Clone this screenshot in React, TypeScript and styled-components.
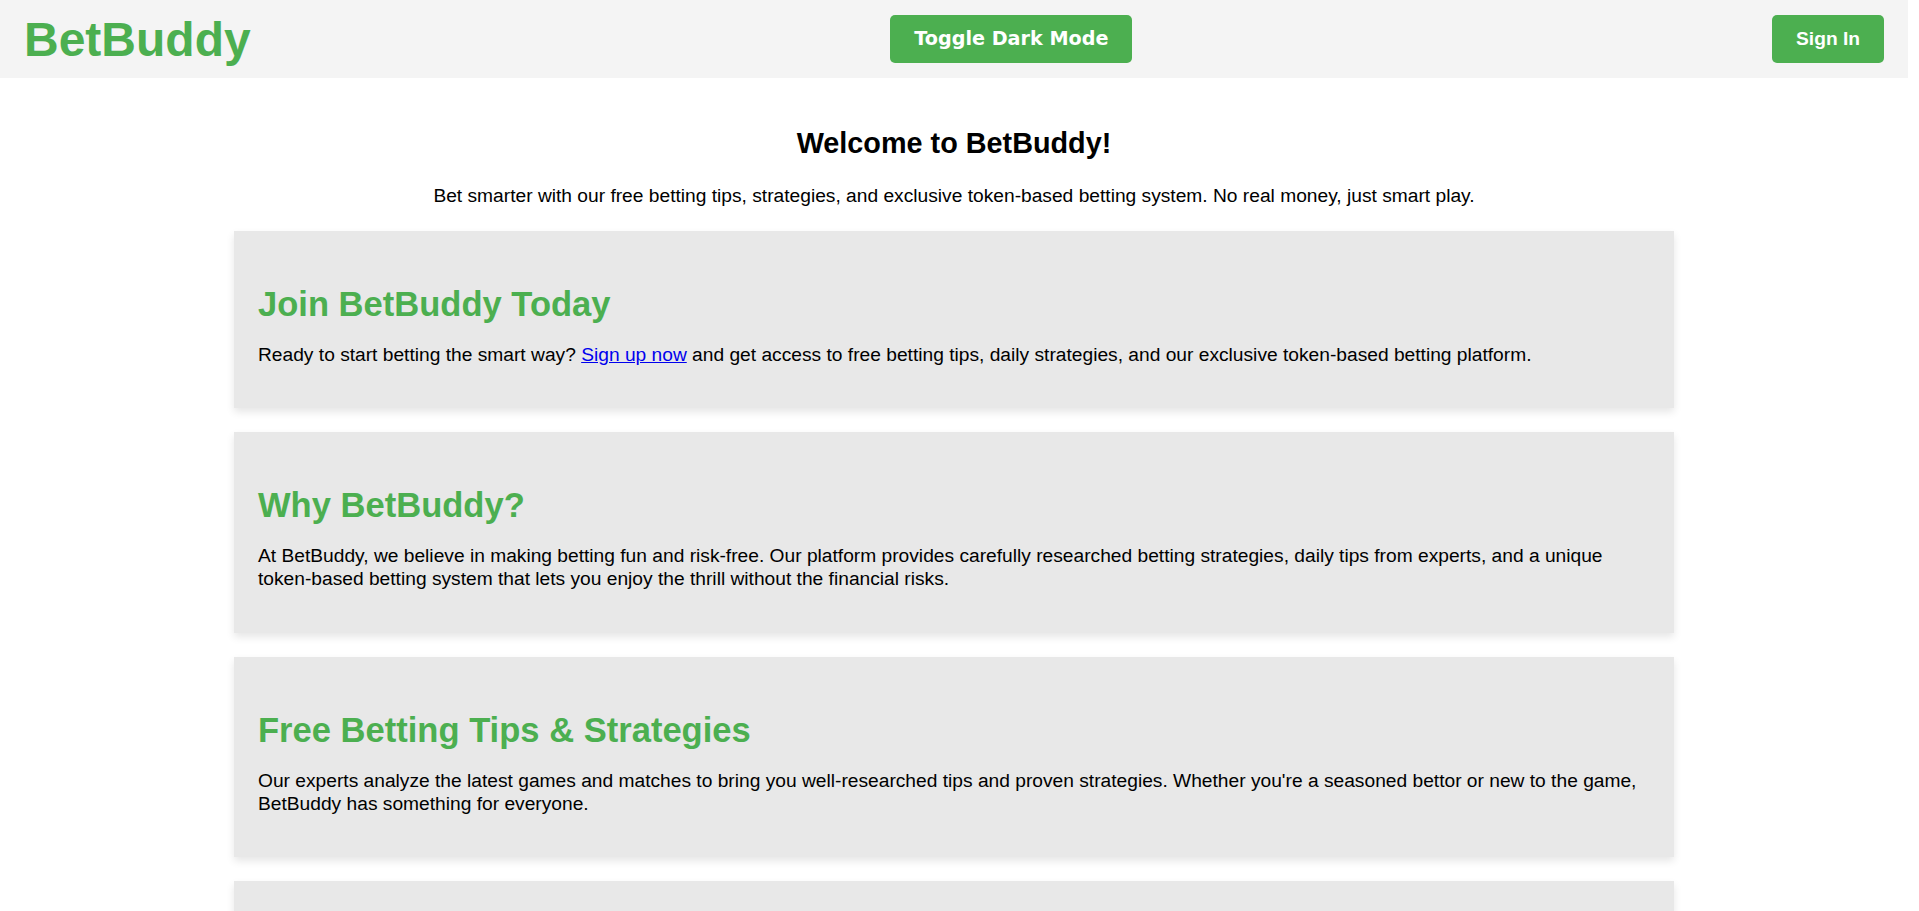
import React from "react";
import styled, { createGlobalStyle } from "styled-components";

const GlobalStyle = createGlobalStyle`
  body {
    margin: 0 11px 0 0;
    font-family: "Liberation Sans", Arial, sans-serif;
    background-color: #ffffff;
    color: #000000;
  }
`;

const Header = styled.header`
  display: flex;
  justify-content: space-between;
  align-items: center;
  padding: 11.5px 24px;
  background-color: #f4f4f4;
`;

const Logo = styled.h1`
  margin: 0;
  font-size: 48px;
  font-weight: 700;
  line-height: normal;
  color: #4caf50;
`;

const Button = styled.button<{ $system?: boolean }>`
  padding: 12px 24px;
  border: none;
  border-radius: 5px;
  background-color: #4caf50;
  color: #ffffff;
  font-family: ${(p) =>
    p.$system ? '"DejaVu Sans", Verdana, sans-serif' : '"Liberation Sans", Arial, sans-serif'};
  font-size: 19.2px;
  font-weight: 700;
  line-height: 1.2;
  cursor: pointer;
`;

const Main = styled.main`
  padding: 25px 20px 40px;
  font-size: 1.2em;
  line-height: 1.2;
`;

const Intro = styled.section`
  text-align: center;
`;

const IntroTitle = styled.h2`
  margin: 0.83em 0;
  font-size: 1.5em;
  line-height: normal;
`;

const Text = styled.p`
  margin: 1em 0;
`;

const Card = styled.section`
  max-width: 1392px;
  margin: 24px auto;
  padding: 24px 24px 23px;
  background-color: #e8e8e8;
  box-shadow: 0 4px 8px rgba(0, 0, 0, 0.1);
`;

const CardTitle = styled.h2`
  margin: 30px 0 10px;
  font-size: 1.8em;
  line-height: normal;
  color: #4caf50;
`;

const Link = styled.a`
  color: #0000ee;
  text-decoration: underline;
`;

const cards = [
  {
    title: "Why BetBuddy?",
    text: "At BetBuddy, we believe in making betting fun and risk-free. Our platform provides carefully researched betting strategies, daily tips from experts, and a unique token-based betting system that lets you enjoy the thrill without the financial risks.",
  },
  {
    title: "Free Betting Tips & Strategies",
    text: "Our experts analyze the latest games and matches to bring you well-researched tips and proven strategies. Whether you're a seasoned bettor or new to the game, BetBuddy has something for everyone.",
  },
  {
    title: "Token-Based Betting System",
    text: "Every new member receives free tokens to place bets on upcoming games. Track your wins, climb the leaderboard, and sharpen your skills without ever risking a single cent of real money.",
  },
  {
    title: "Daily Expert Picks",
    text: "Check back every day for fresh picks covering football, basketball, tennis and more.",
  },
  {
    title: "Join the Community",
    text: "Share your predictions, compare results with friends, and learn from other players in the BetBuddy community. Smart play is always more fun together.",
  },
];

export default function App() {
  return (
    <>
      <GlobalStyle />
      <Header>
        <Logo>BetBuddy</Logo>
        <Button $system>Toggle Dark Mode</Button>
        <Button>Sign In</Button>
      </Header>
      <Main>
        <Intro>
          <IntroTitle>Welcome to BetBuddy!</IntroTitle>
          <Text>
            Bet smarter with our free betting tips, strategies, and exclusive token-based betting
            system. No real money, just smart play.
          </Text>
        </Intro>
        <Card>
          <CardTitle>Join BetBuddy Today</CardTitle>
          <Text>
            Ready to start betting the smart way? <Link href="#">Sign up now</Link> and get access
            to free betting tips, daily strategies, and our exclusive token-based betting platform.
          </Text>
        </Card>
        {cards.map((c) => (
          <Card key={c.title}>
            <CardTitle>{c.title}</CardTitle>
            <Text>{c.text}</Text>
          </Card>
        ))}
      </Main>
    </>
  );
}
